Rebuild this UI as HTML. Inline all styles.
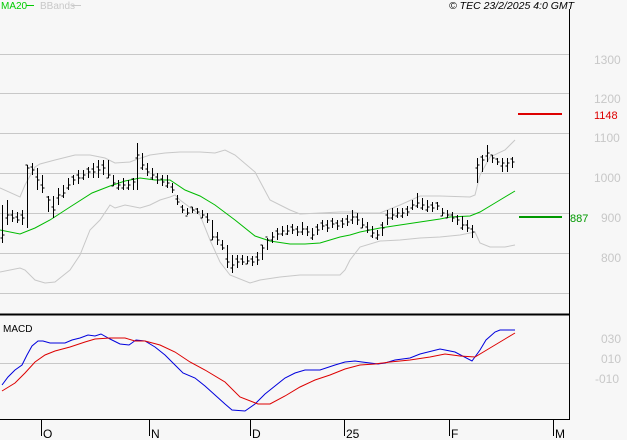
<!DOCTYPE html>
<html><head><meta charset="utf-8"><style>
html,body{margin:0;padding:0;background:#f7f7f7;}
svg{display:block;font-family:"Liberation Sans",sans-serif;}
</style></head><body>
<svg id="s" width="627" height="440" viewBox="0 0 627 440" xmlns="http://www.w3.org/2000/svg">
<rect width="627" height="440" fill="#f7f7f7"/>
<g stroke="#c8c8c8" stroke-width="1">
<line x1="0" y1="54.5" x2="569" y2="54.5"/>
<line x1="0" y1="93.5" x2="569" y2="93.5"/>
<line x1="0" y1="133.5" x2="569" y2="133.5"/>
<line x1="0" y1="173.5" x2="569" y2="173.5"/>
<line x1="0" y1="213.5" x2="569" y2="213.5"/>
<line x1="0" y1="253.5" x2="569" y2="253.5"/>
<line x1="0" y1="293.5" x2="569" y2="293.5"/>
<line x1="0" y1="363.5" x2="569" y2="363.5"/>
</g>
<g font-size="12" fill="#c8c8c8">
<text x="594" y="64">1300</text><text x="594" y="103">1200</text><text x="594" y="142">1100</text>
<text x="594" y="182">1000</text><text x="601" y="222">900</text><text x="601" y="262">800</text>
<text x="601" y="343">030</text><text x="601" y="363">010</text><text x="595" y="383">-010</text>
</g>
<line x1="518" y1="114" x2="562" y2="114" stroke="#dd0000" stroke-width="2"/>
<text x="594" y="119" font-size="11" fill="#dd0000">1148</text>
<line x1="519" y1="217" x2="562" y2="217" stroke="#009900" stroke-width="2"/>
<text x="570" y="222" font-size="11" fill="#009900">887</text>
<g fill="none" stroke="#c8c8c8" stroke-width="1">
<polyline points="0,188 20,197 25,185 35,167 40,164 55,160 75,155 90,155 105,158 115,163 130,162 135,160 150,155 165,153 180,152 200,152 215,153 225,150 235,155 255,172 270,200 290,210 300,214 320,213 340,212 352,212 360,213 380,213 400,205 420,196 440,196 470,197 475,195 480,175 490,157 505,150 515,140"/>
<polyline points="0,272 20,268 25,270 35,280 45,283 55,282 70,270 80,255 90,230 100,220 110,205 115,208 125,205 140,208 150,205 160,200 170,197 175,195 180,200 200,215 210,240 220,262 230,275 250,283 260,280 280,277 300,275 320,275 340,275 345,270 350,260 360,247 380,241 400,240 420,238 440,237 460,235 470,233 475,232 480,243 490,247 505,247 515,245"/>
</g>
<polyline fill="none" stroke="#00bb00" stroke-width="1" points="0,230 20,234 35,228 50,220 70,207 92,193 110,186 125,181 140,178 155,180 170,180 185,190 200,196 215,205 235,220 255,236 270,241 290,244 305,244 320,243 340,237 350,235 360,232 380,228 400,225 420,222 440,219 450,217 470,216 480,212 495,203 515,191"/>
<g id="bars" stroke="#000" stroke-width="1"></g>
<g fill="none" stroke-width="1">
<polyline stroke="#0000dd" points="2,385 8,377 15,370 22,365 27,355 32,346 38,341 43,341 50,343 65,343 72,340 80,338 88,335 95,336 101,334 110,339 120,344 129,345 136,340 145,341 155,347 165,355 175,365 183,373 195,378 205,386 215,395 225,404 232,410 245,411 255,404 265,394 275,386 285,378 295,373 305,370 320,370 335,365 345,362 355,361 362,362 370,363 378,364 385,363 395,360 410,358 420,354 440,349 445,350 455,352 472,361 480,350 486,340 495,332 500,330 515,330"/>
<polyline stroke="#dd0000" points="2,391 15,383 25,373 35,362 45,355 55,351 70,347 85,342 95,339 110,338 125,338 135,341 145,341 160,345 175,352 190,362 205,370 225,382 240,397 258,404 270,404 285,396 300,387 315,380 330,375 345,369 360,365 375,364 390,362 410,360 430,357 445,354 460,356 475,357 490,348 505,339 515,333"/>
</g>
<text x="3" y="332" font-size="10" fill="#000">MACD</text>
<line x1="0" y1="314.5" x2="569" y2="314.5" stroke="#000" stroke-width="2"/>
<line x1="569.5" y1="9" x2="569.5" y2="420" stroke="#000" stroke-width="1"/>
<line x1="0" y1="419.5" x2="569" y2="419.5" stroke="#000" stroke-width="1"/>
<g stroke="#000" stroke-width="1">
<line x1="41.5" y1="420" x2="41.5" y2="436"/><line x1="149.5" y1="420" x2="149.5" y2="436"/>
<line x1="250.5" y1="420" x2="250.5" y2="436"/><line x1="344.5" y1="420" x2="344.5" y2="436"/>
<line x1="449.5" y1="420" x2="449.5" y2="436"/><line x1="553.5" y1="420" x2="553.5" y2="436"/>
</g>
<g font-size="12" fill="#000">
<text x="43" y="438">O</text><text x="151" y="438">N</text><text x="252" y="438">D</text>
<text x="346" y="438">25</text><text x="451" y="438">F</text><text x="555" y="438">M</text>
</g>
<text x="1" y="9" font-size="10" fill="#00cc00">MA20</text>
<line x1="26" y1="5.5" x2="34" y2="5.5" stroke="#00cc00" stroke-width="1"/>
<text x="40" y="9" font-size="10" fill="#c8c8c8">BBands</text>
<line x1="72" y1="5.5" x2="81" y2="5.5" stroke="#c8c8c8" stroke-width="1"/>
<text x="449" y="9" font-size="10.5" font-style="italic" fill="#000">© TEC 23/2/2025 4:0 GMT</text>
</svg>
<script>
var c=[[2,235,205,243],[7,215,200,225],[12,218,210,222],[17,220,212,223],[22,218,210,225],[27,168,165,228],[32,170,163,175],[37,180,168,190],[42,188,175,193],[48,200,196,212],[53,210,196,218],[58,195,188,205],[63,193,185,198],[68,185,178,190],[73,180,175,185],[78,178,170,184],[83,175,170,180],[88,172,167,178],[93,172,163,178],[98,170,160,178],[103,168,160,175],[108,175,160,178],[113,183,175,186],[118,185,180,190],[123,185,178,190],[128,185,180,190],[133,182,178,190],[137,155,143,190],[142,165,153,170],[147,172,163,176],[152,175,168,180],[157,180,173,184],[162,182,175,186],[167,183,175,188],[172,190,183,193],[177,202,195,205],[182,210,205,213],[187,213,208,215],[192,210,207,213],[197,212,208,214],[202,215,210,218],[207,220,213,223],[212,237,220,240],[217,240,232,245],[222,248,240,250],[227,262,245,268],[232,265,255,273],[237,262,255,268],[242,262,255,265],[247,261,256,264],[252,262,256,266],[257,260,252,265],[262,248,245,260],[267,240,238,250],[272,237,232,243],[277,234,228,240],[282,231,226,236],[287,231,225,235],[292,230,224,234],[297,232,226,236],[302,229,222,235],[307,232,226,236],[312,235,228,240],[317,230,224,235],[322,226,220,230],[327,228,220,232],[332,224,218,228],[337,226,220,230],[342,224,218,228],[347,222,215,226],[352,217,210,224],[357,220,213,225],[362,225,218,228],[367,230,222,233],[372,233,226,238],[377,235,230,240],[382,228,222,236],[387,218,210,225],[392,215,208,220],[397,213,208,218],[402,213,208,218],[407,212,206,216],[412,205,200,210],[417,203,193,208],[422,205,198,210],[427,207,200,212],[432,208,202,212],[437,206,202,210],[442,213,208,216],[447,215,210,218],[452,218,212,222],[457,220,215,225],[462,225,216,230],[467,228,220,232],[472,232,225,238],[477,165,158,183],[482,160,155,172],[487,153,145,162],[492,158,155,163],[497,162,158,165],[502,163,158,172],[507,163,158,172],[512,162,157,168]];
var g=document.getElementById('bars'),ns='http://www.w3.org/2000/svg',h='';
c.forEach(function(b){var x=b[0]+.5;h+='<line x1="'+x+'" y1="'+b[2]+'" x2="'+x+'" y2="'+b[3]+'"/>';var o=(b[1]+ (b[1]%2?3:-3));h+='<line x1="'+(x-2)+'" y1="'+o+'" x2="'+x+'" y2="'+o+'"/><line x1="'+x+'" y1="'+b[1]+'" x2="'+(x+2)+'" y2="'+b[1]+'"/>';});
g.innerHTML=h;
</script>
</body></html>
